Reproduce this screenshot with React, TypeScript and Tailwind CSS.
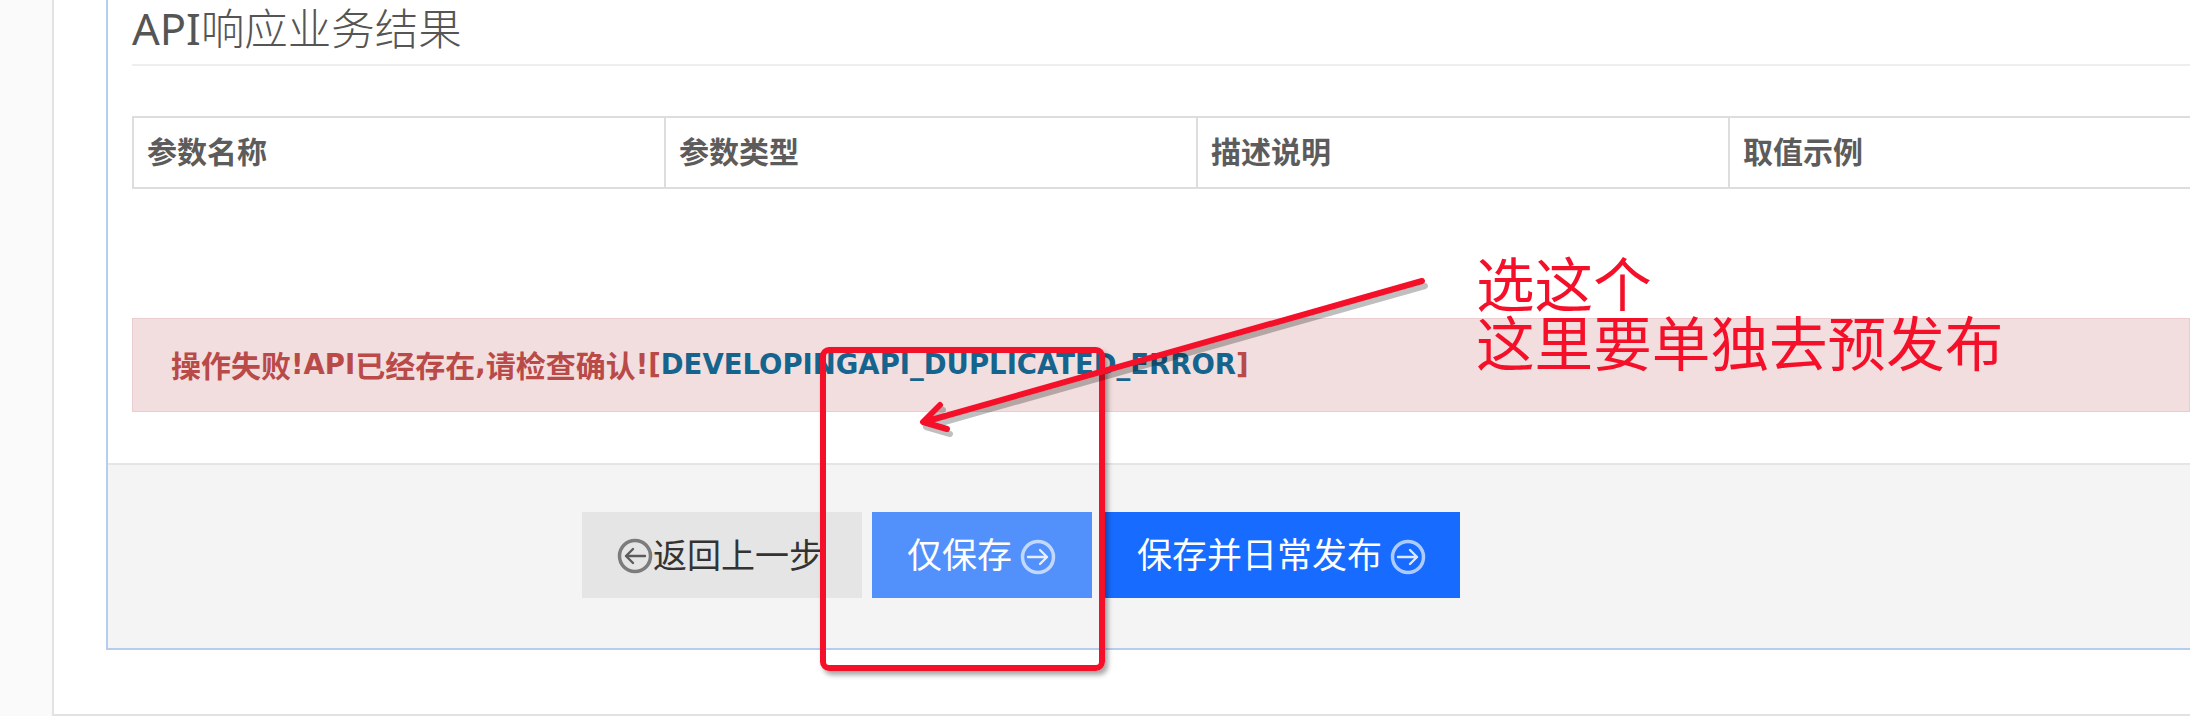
const font = "font-['Noto_Sans','Noto_Sans_CJK_SC',sans-serif]";
const latin = "font-['DejaVu_Sans',sans-serif] text-[27.5px]";

function CircleArrow({ left, className }: { left?: boolean; className: string }) {
  return (
    <svg viewBox="0 0 36 36" fill="none" className={className}>
      <circle cx="18" cy="18" r="15.5" strokeWidth="3.5" stroke="currentColor" opacity="0.65" />
      <path
        d={left ? "M28 18H9M16 11l-7 7 7 7" : "M8 18h19M20 11l7 7-7 7"}
        strokeWidth="2.4"
        stroke="currentColor"
        strokeOpacity="0.85"
        strokeLinecap="round"
        strokeLinejoin="round"
      />
    </svg>
  );
}

export default function App() {
  return (
    <div className={`${font} relative flex h-[716px] w-full overflow-hidden bg-[#fafafa]`}>
      <div className="w-[52px] shrink-0" />
      <div className="min-w-0 flex-1 border-b-2 border-l-2 border-[#e2e2e2] bg-white pl-[52px]">
        <div className="flex h-[650px] flex-col border-b-2 border-l-2 border-[#b7cdf0]">
          <div className="h-[463px] pl-6">
            <h2 className="h-[66px] border-b-2 border-[#eeeeee] text-[43.5px] leading-[56px] font-light text-[#555555]">
              <span className="font-normal">API</span>响应业务结果
            </h2>
            <div className="mt-[50px] grid h-[73px] grid-cols-[532px_532px_532px_1fr] border-y-2 border-l-2 border-[#dddddd] text-[30px] leading-[68px] font-bold text-[#5c5c5c]">
              <div className="border-r-2 border-[#dddddd] pl-[13px]">参数名称</div>
              <div className="border-r-2 border-[#dddddd] pl-[13px]">参数类型</div>
              <div className="border-r-2 border-[#dddddd] pl-[13px]">描述说明</div>
              <div className="pl-[13px]">取值示例</div>
            </div>
            <div className="mt-[129px] flex h-[94px] items-center border border-[#ebccd1] bg-[#f2dede] pl-[38px] text-[30px] font-bold whitespace-nowrap text-[#b94a48]">
              操作失败<span className={latin}>!API</span>已经存在<span className={latin}>,</span>请检查确认
              <span className={latin}>![</span>
              <span className={`${latin} text-[#15648d]`}>DEVELOPINGAPI_DUPLICATED_ERROR</span>
              <span className={latin}>]</span>
            </div>
          </div>
          <div className="flex flex-1 items-start border-t-2 border-[#e5e5e5] bg-[#f4f4f4] pt-[47px] pl-[474px]">
            <button className="flex h-[86px] w-[280px] items-center bg-[#e5e5e5] pl-[35px] text-[34px] text-[#333333]">
              <CircleArrow left className="mt-[2px] size-[36px] text-[#444444]" />
              返回上一步
            </button>
            <button className="ml-[10px] flex h-[86px] w-[220px] items-center gap-[8px] bg-[#5291fb] pl-[35px] text-[35px] text-white">
              仅保存
              <CircleArrow className="mt-[3px] size-[36px] text-white" />
            </button>
            <button className="ml-[13px] flex h-[86px] w-[355px] items-center gap-[8px] bg-[#176bff] pl-[32px] text-[35px] text-white">
              保存并日常发布
              <CircleArrow className="mt-[3px] size-[36px] text-white" />
            </button>
          </div>
        </div>
      </div>

      <div className="absolute top-[347px] left-[820px] h-[324px] w-[285px] rounded-[9px] border-[6px] border-[#f5102a] shadow-[3px_4px_5px_rgba(0,0,0,0.35)]" />
      <svg className="absolute top-0 left-0 h-[716px] w-[2190px]" viewBox="0 0 2190 716" fill="none">
        <g stroke="#000000" strokeOpacity="0.25" strokeWidth="6" strokeLinecap="round" strokeLinejoin="round" transform="translate(3 5)">
          <path d="M1422 281 924 422M940 405l-17 17 24 7" />
        </g>
        <g stroke="#f5102a" strokeWidth="6" strokeLinecap="round" strokeLinejoin="round">
          <path d="M1422 281 924 422M940 405l-17 17 24 7" />
        </g>
      </svg>
      <div className="absolute top-[255px] left-[1476px] text-[58.6px] leading-[59px] whitespace-nowrap text-[#f5102a]">
        选这个
        <br />
        这里要单独去预发布
      </div>
    </div>
  );
}
